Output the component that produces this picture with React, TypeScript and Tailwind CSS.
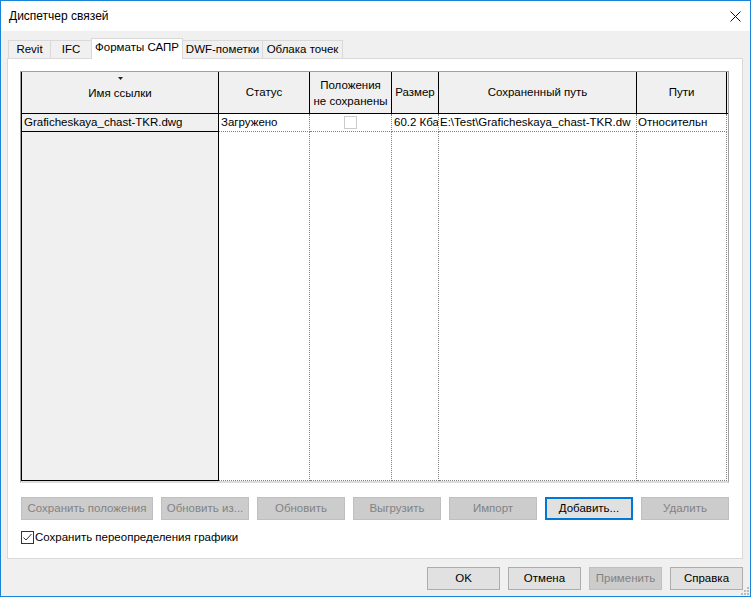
import React from 'react'

const cellRule = 'border-r border-dotted border-[#808080]'

function Btn({
  label,
  width,
  disabled,
  focused,
}: {
  label: string
  width: string
  disabled?: boolean
  focused?: boolean
}) {
  const look = disabled
    ? 'border border-[#bfbfbf] bg-[#cccccc] text-[#838383]'
    : focused
      ? 'border-2 border-[#0078d7] bg-[#e1e1e1] text-black'
      : 'border border-[#adadad] bg-[#e1e1e1] text-black'
  return (
    <div className={`flex h-[23px] shrink-0 items-center justify-center whitespace-nowrap ${width} ${look}`}>
      {label}
    </div>
  )
}

function Tab({ label, width, active }: { label: string; width: string; active?: boolean }) {
  return active ? (
    <div
      className={`relative z-10 -mb-px -ml-px flex h-[21px] items-center justify-center border border-b-0 border-[#d9d9d9] bg-white pb-[2px] ${width}`}
    >
      {label}
    </div>
  ) : (
    <div
      className={`-ml-px flex h-[18px] items-center justify-center border border-b-0 border-[#d9d9d9] bg-[#f0f0f0] first:ml-0 ${width}`}
    >
      {label}
    </div>
  )
}

export default function App() {
  return (
    <div className="relative flex h-[597px] w-[751px] flex-col border border-[#1883d7] bg-[#f0f0f0] font-['Liberation_Sans',Arial,sans-serif] text-[11.5px] leading-none text-black">
      {/* title bar */}
      <div className="flex h-[30px] shrink-0 items-center justify-between bg-white pl-[8px] pr-[9px]">
        <span className="text-[12px]">Диспетчер связей</span>
        <svg width="11" height="11" viewBox="0 0 11 11">
          <path d="M0.5 0.5L10.5 10.5M10.5 0.5L0.5 10.5" stroke="#111" strokeWidth="1" />
        </svg>
      </div>

      <div className="flex flex-1 flex-col pl-[6px] pr-[7px] pt-[7px]">
        {/* tabs */}
        <div className="flex h-[20px] items-end pl-px">
          <Tab label="Revit" width="w-[43px]" />
          <Tab label="IFC" width="w-[42px]" />
          <Tab label="Форматы САПР" width="w-[92px]" active />
          <Tab label="DWF-пометки" width="w-[81px]" />
          <Tab label="Облака точек" width="w-[81px]" />
        </div>

        {/* tab page */}
        <div className="flex h-[501px] flex-col border border-[#d9d9d9] bg-white pl-[12px] pr-[13px] pt-[12px]">
          <div className="flex h-[412px] w-[709px] flex-col border-x border-t border-b-2 border-[#a0a0a0] border-b-[#dcdcdc]">
            {/* header */}
            <div className="flex h-[42px] shrink-0 border-b border-black bg-[#f0f0f0]">
              <div className="relative flex w-[198px] items-center justify-center border-x border-black pt-[2px]">
                <svg className="absolute left-[96px] top-[5px]" width="5" height="3" viewBox="0 0 5 3">
                  <path d="M0 0H5L2.5 3Z" fill="#222" />
                </svg>
                Имя ссылки
              </div>
              <div className="flex w-[91px] items-center justify-center border-r border-black">Статус</div>
              <div className="flex w-[82px] flex-col items-center justify-center border-r border-black leading-[16px]">
                <span>Положения</span>
                <span>не сохранены</span>
              </div>
              <div className="flex w-[47px] items-center justify-center border-r border-black">Размер</div>
              <div className="flex w-[198px] items-center justify-center border-r border-black">Сохраненный путь</div>
              <div className="flex w-[90px] items-center justify-center border-r border-black">Пути</div>
              <div className="w-px" />
            </div>

            {/* row 1 */}
            <div className="flex h-[18px] shrink-0">
              <div className="flex w-[198px] items-center overflow-hidden whitespace-nowrap border-x border-b border-black bg-[#f0f0f0] pl-[2px]">
                Graficheskaya_chast-TKR.dwg
              </div>
              <div className={`flex w-[91px] items-center overflow-hidden whitespace-nowrap border-b pl-[2px] ${cellRule}`}>
                Загружено
              </div>
              <div className={`flex w-[82px] items-center justify-center border-b ${cellRule}`}>
                <div className="h-[13px] w-[13px] border border-[#cccccc] bg-white" />
              </div>
              <div className={`flex w-[47px] items-center overflow-hidden whitespace-nowrap border-b pl-[2px] ${cellRule}`}>
                60.2 Кба
              </div>
              <div className={`flex w-[198px] items-center overflow-hidden whitespace-nowrap border-b pl-px ${cellRule}`}>
                E:\Test\Graficheskaya_chast-TKR.dw
              </div>
              <div className={`flex w-[90px] items-center overflow-hidden whitespace-nowrap border-b pl-px ${cellRule}`}>
                Относительн
              </div>
              <div className="w-px" />
            </div>

            {/* empty rest */}
            <div className="flex flex-1">
              <div className="w-[198px] border-x border-b border-black bg-[#f0f0f0]" />
              <div className={`w-[91px] border-b ${cellRule}`} />
              <div className={`w-[82px] border-b ${cellRule}`} />
              <div className={`w-[47px] border-b ${cellRule}`} />
              <div className={`w-[198px] border-b ${cellRule}`} />
              <div className={`w-[90px] border-b ${cellRule}`} />
              <div className="w-px" />
            </div>
          </div>

          <div className="mt-[14px] flex gap-[8px] pl-px">
            <Btn label="Сохранить положения" width="w-[132px]" disabled />
            <Btn label="Обновить из..." width="w-[88px]" disabled />
            <Btn label="Обновить" width="w-[88px]" disabled />
            <Btn label="Выгрузить" width="w-[88px]" disabled />
            <Btn label="Импорт" width="w-[88px]" disabled />
            <Btn label="Добавить..." width="w-[88px]" focused />
            <Btn label="Удалить" width="w-[88px]" disabled />
          </div>

          <div className="mt-[11px] flex h-[13px] items-center gap-[1px] pl-px">
            <div className="h-[13px] w-[13px] border border-[#333333] bg-white">
              <svg width="11" height="11" viewBox="0 0 11 11">
                <path d="M1.5 5.5L4 8L9.5 2" fill="none" stroke="#333" strokeWidth="1" />
              </svg>
            </div>
            <span>Сохранить переопределения графики</span>
          </div>
        </div>

        <div className="mt-[8px] flex justify-end gap-[8px]">
          <Btn label="OK" width="w-[73px]" />
          <Btn label="Отмена" width="w-[73px]" />
          <Btn label="Применить" width="w-[73px]" disabled />
          <Btn label="Справка" width="w-[73px]" />
        </div>
      </div>

      {/* size grip */}
      <svg className="absolute bottom-[1px] right-[1px]" width="9" height="9" viewBox="0 0 9 9">
        <g fill="#bcbcbc">
          <rect x="7" y="1" width="2" height="2" />
          <rect x="4" y="4" width="2" height="2" />
          <rect x="7" y="4" width="2" height="2" />
          <rect x="1" y="7" width="2" height="2" />
          <rect x="4" y="7" width="2" height="2" />
          <rect x="7" y="7" width="2" height="2" />
        </g>
      </svg>
    </div>
  )
}
